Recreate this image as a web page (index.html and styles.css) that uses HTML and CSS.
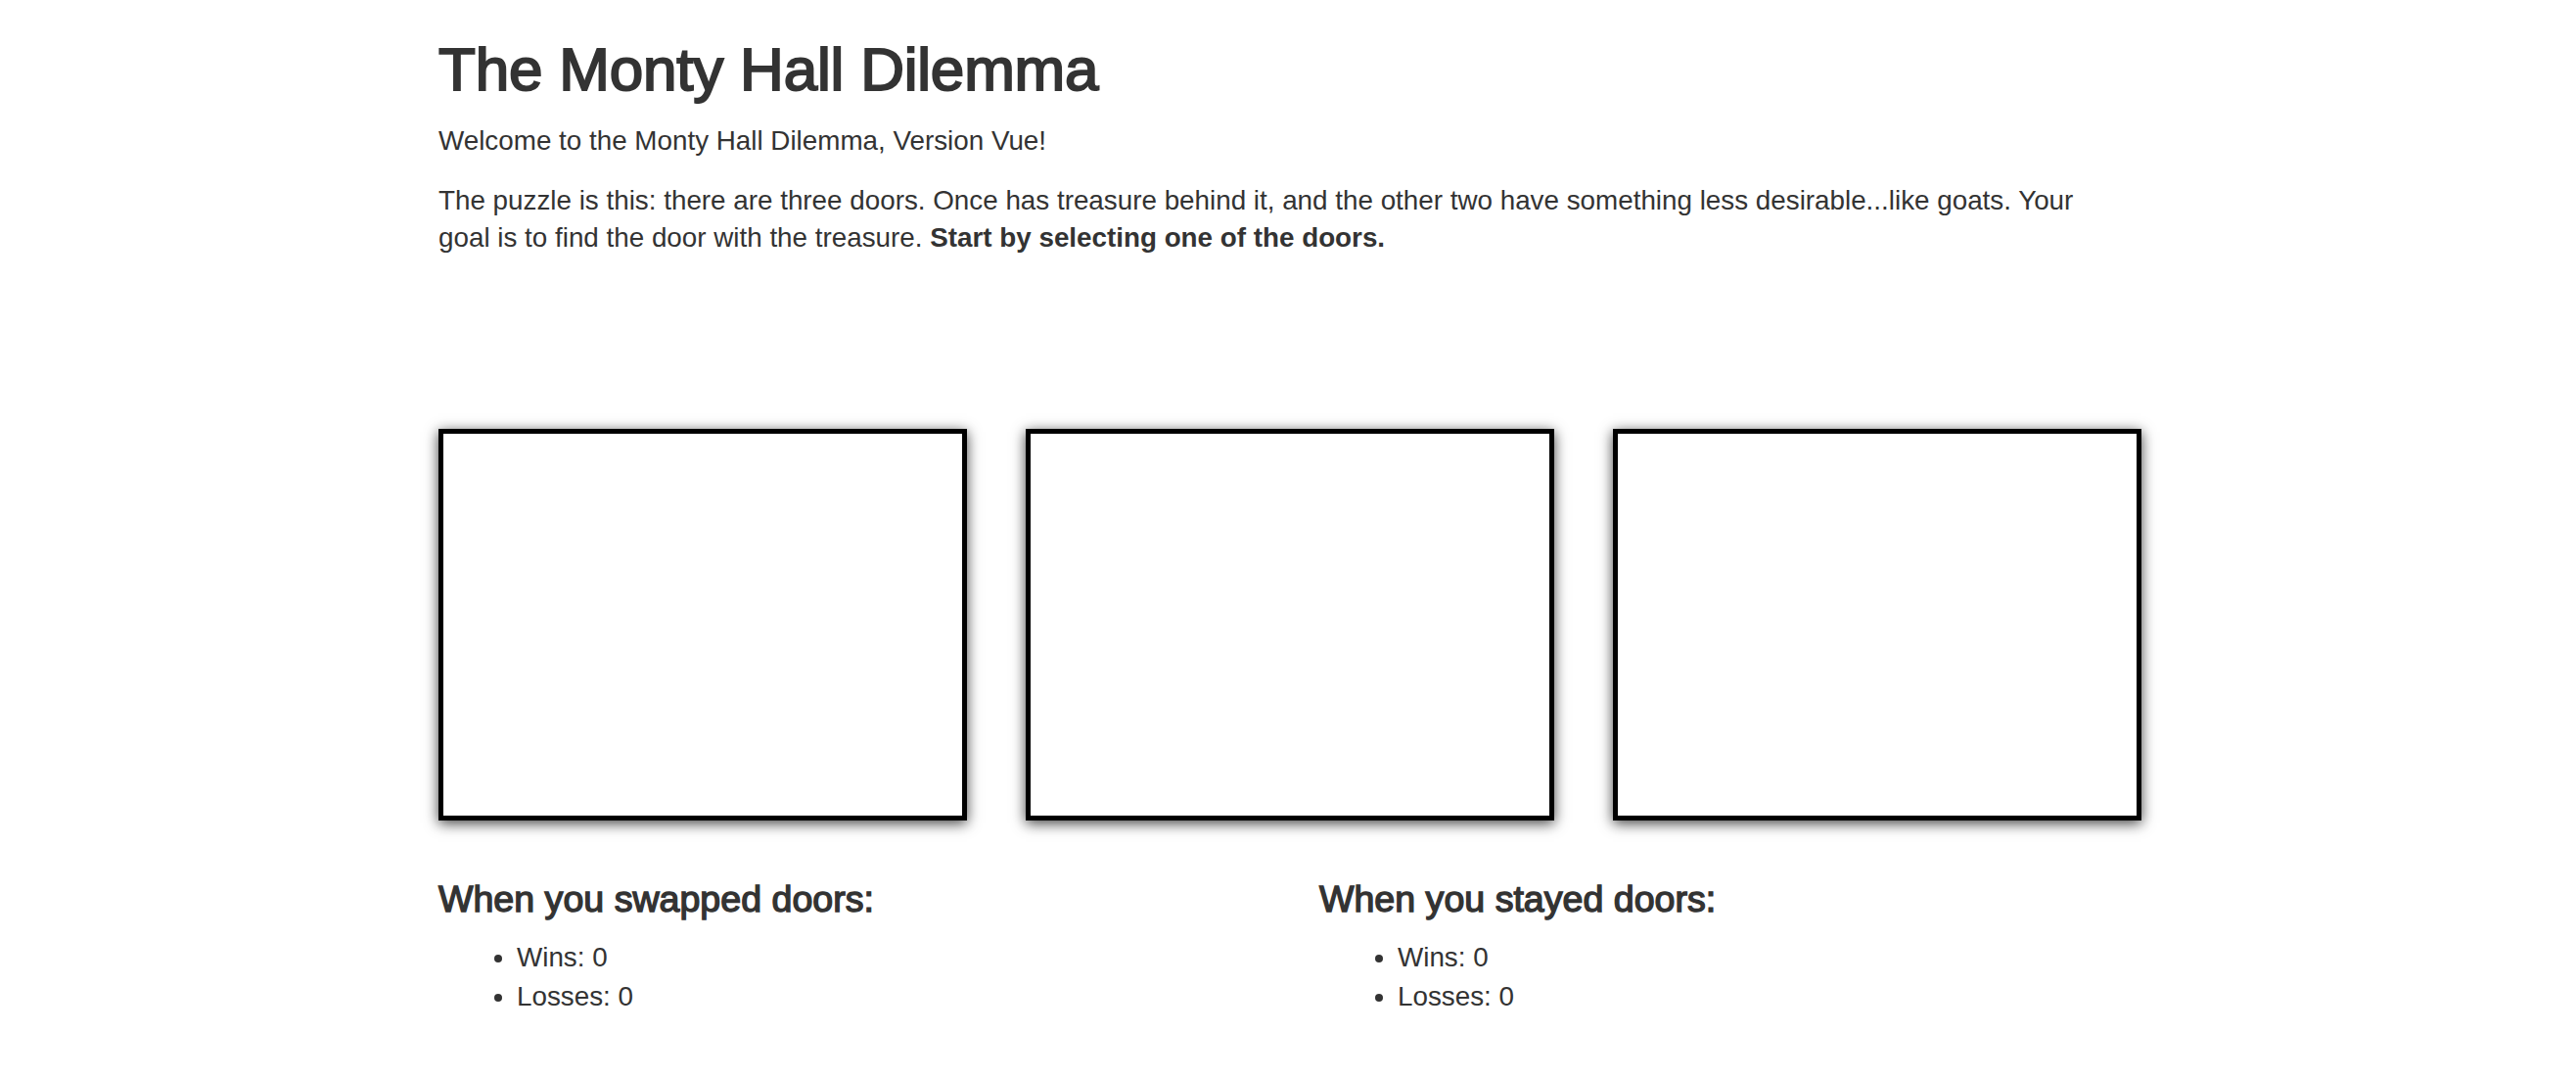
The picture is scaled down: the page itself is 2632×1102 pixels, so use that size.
FILE: index.html
```html
<!DOCTYPE html>
<html lang="en">
<head>
<meta charset="utf-8">
<title>The Monty Hall Dilemma</title>
<link rel="stylesheet" href="styles.css">
</head>
<body>
<div class="container">
  <h1 class="title">The Monty Hall Dilemma</h1>
  <p class="text">Welcome to the Monty Hall Dilemma, Version Vue!</p>
  <p class="text intro"><span>The puzzle is this: there are three doors. Once has treasure behind it, and the other two have something less desirable...like goats. Your</span> <span>goal is to find the door with the treasure.</span> <strong>Start by selecting one of the doors.</strong></p>

  <div class="doors">
    <div class="door-col"><div class="door"></div></div>
    <div class="door-col"><div class="door"></div></div>
    <div class="door-col"><div class="door"></div></div>
  </div>

  <div class="stats">
    <div class="stat-col">
      <h3 class="stat-title">When you swapped doors:</h3>
      <ul class="stat-list">
        <li>Wins: 0</li>
        <li>Losses: 0</li>
      </ul>
    </div>
    <div class="stat-col">
      <h3 class="stat-title">When you stayed doors:</h3>
      <ul class="stat-list">
        <li>Wins: 0</li>
        <li>Losses: 0</li>
      </ul>
    </div>
  </div>
</div>
</body>
</html>
```

FILE: styles.css
```css
html, body {
  margin: 0;
  padding: 0;
  background: #fff;
}

body {
  font-family: "Liberation Sans", Arial, Helvetica, sans-serif;
  color: #333;
  font-size: 27.8px;
  line-height: 38.5px;
}

.container {
  width: 1800px;
  margin-left: 433px;
  padding: 0 15px;
  box-sizing: border-box;
}

.title {
  margin: 37px 0 20px;
  font-size: 62px;
  line-height: 1.1;
  font-weight: 400;
  -webkit-text-stroke: 2px #333;
  letter-spacing: -0.2px;
}

.text {
  margin: 0 0 22px;
}

.intro {
  width: 1690px;
}

.intro strong {
  font-weight: 700;
}

.doors {
  display: grid;
  grid-template-columns: repeat(3, 600px);
  margin: 175px -15px 0;
}

.door-col {
  padding: 0 15px;
}

.door {
  width: 540px;
  height: 400px;
  box-sizing: border-box;
  border: 5px solid #000;
  background: #fff;
  box-shadow: 0 3px 13px rgba(0, 0, 0, 0.75);
}

.stats {
  display: grid;
  grid-template-columns: repeat(2, 900px);
  margin: 60px -15px 0;
}

.stat-col {
  padding: 0 15px;
}

.stat-title {
  margin: 0 0 19px;
  font-size: 37.6px;
  line-height: 1.1;
  font-weight: 400;
  -webkit-text-stroke: 1.4px #333;
}

.stat-list {
  margin: 0;
  padding: 0 0 0 80px;
}

.stat-list li {
  line-height: 40px;
}
```
